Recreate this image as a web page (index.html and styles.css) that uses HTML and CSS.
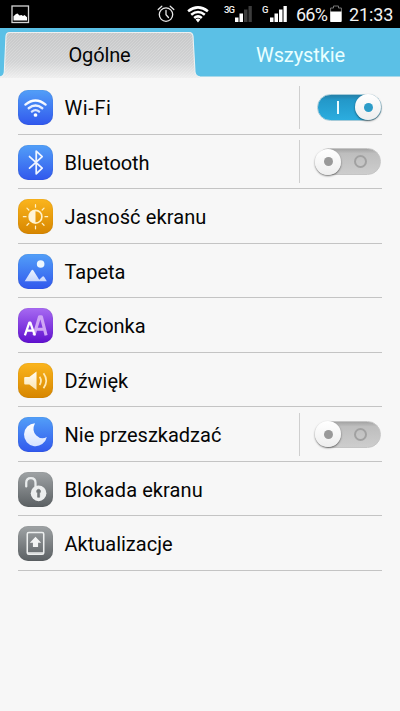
FILE: index.html
```html
<!DOCTYPE html>
<html lang="pl">
<head>
<meta charset="utf-8">
<title>Ustawienia</title>
<link rel="stylesheet" href="styles.css">
</head>
<body>
<svg class="defs" width="0" height="0" aria-hidden="true">
  <defs>
    <linearGradient id="white" x1="0" y1="0" x2="0" y2="1"><stop offset="0" stop-color="#fff"/><stop offset="1" stop-color="#d5e2ff"/></linearGradient>
    <linearGradient id="cream" x1="0" y1="0" x2="0" y2="1"><stop offset="0" stop-color="#fffdf5"/><stop offset="1" stop-color="#fbe4b0"/></linearGradient>
  </defs>
</svg>
<header class="status">
  <svg class="st-picture" width="19" height="19" viewBox="0 0 19 19"><rect x="1" y="1" width="16.500" height="16.500" fill="none" stroke="#d4d4d4" stroke-width="1.300"/><path d="M2.500 15.500V11.200L5 9L6.500 8.500L8.500 10.500L10.500 10L12 11L13.500 10L16 12.200V15.500Z" fill="#fff"/></svg>
  <svg class="st-alarm" width="18" height="18" viewBox="0 0 18 18" fill="none" stroke="#e8e8e8" stroke-width="1.300" stroke-linecap="round"><circle cx="9" cy="9.600" r="6.700"/><path d="M9 5.500V9.700L11.500 12.500M1.200 4.500L4.800 1.300M16.800 4.500L13.200 1.300"/></svg>
  <svg class="st-wifi" width="22" height="18" viewBox="0 0 22 18" fill="none" stroke="#fff" stroke-width="2.600"><path d="M1.100 6.200Q11-1.500 20.900 6.200M4.200 9.700Q11 4.300 17.800 9.700M7.200 13Q11 9.700 14.800 13"/><path d="M8.600 14.500Q11 12.600 13.400 14.500L11 17.500Z" fill="#fff" stroke="none"/></svg>
  <span class="net net-3g">3G</span>
  <svg class="bars bars-a" width="17" height="18" viewBox="0 0 17 18" fill="#fff"><rect y="12.500" width="3.500" height="4.500"/><rect x="4.500" y="8.500" width="3.500" height="8.500"/><rect x="9" y="4.500" width="3.500" height="12.500" fill="#3d3d3d"/><rect x="13.500" y="1" width="3.300" height="16" fill="#3d3d3d"/></svg>
  <span class="net net-g">G</span>
  <svg class="bars bars-b" width="17" height="18" viewBox="0 0 17 18" fill="#fff"><rect y="12.500" width="3.500" height="4.500"/><rect x="4.500" y="8.500" width="3.500" height="8.500"/><rect x="9" y="4.500" width="3.500" height="12.500"/><rect x="13.500" y="1" width="3.300" height="16"/></svg>
  <span class="percent">66%</span>
  <svg class="battery" width="12" height="18" viewBox="0 0 12 18"><path d="M.6 16V3H3.500V1H8.500V3H11.400V16" fill="none" stroke="#777"/><rect x=".3" y="6.500" width="11.200" height="10.500" fill="#fff"/></svg>
  <span class="clock">21:33</span>
</header>
<nav class="tabs">
  <div class="tab active">
    <svg class="tab-shape" width="200" height="50" viewBox="0 0 200 50">
      <defs>
        <linearGradient id="tabfill" x1="0" y1="0" x2="0" y2="1"><stop offset="0" stop-color="#c6c7c8"/><stop offset=".65" stop-color="#d2d3d4"/><stop offset="1" stop-color="#efefef"/></linearGradient>
        <pattern id="hatch" width="3" height="3" patternUnits="userSpaceOnUse"><path d="M0 3L3 0" stroke="#fff" stroke-opacity=".3" stroke-width=".6"/></pattern>
      </defs>
      <path d="M0 49Q4 48 4.300 44L6 8Q6.300 4 10 4H189Q192.500 4 193 8L195 44Q195.500 48 200 49V50H0Z" fill="url(#tabfill)"/>
      <path d="M0 49Q4 48 4.300 44L6 8Q6.300 4 10 4H189Q192.500 4 193 8L195 44Q195.500 48 200 49V50H0Z" fill="url(#hatch)"/>
      <path d="M0 49Q4 48 4.300 44L6 8Q6.300 4.500 10 4.500H189Q192.500 4.500 193 8L195 44Q195.500 48 200 49" fill="none" stroke="#eef1f2" stroke-width="1.100"/>
    </svg>
    <span class="tab-name">Ogólne</span>
  </div>
  <div class="tab"><span class="tab-name other">Wszystkie</span></div>
</nav>
<main class="list">
  <div class="row">
    <svg class="icon blue" viewBox="0 0 34 34" fill="none" stroke="url(#white)" stroke-width="2.300" stroke-linecap="round"><path d="M7.200 14.200Q17 6.200 26.800 14.200M10.400 17.700Q17 12.300 23.600 17.700M13.500 21Q17 18.100 20.500 21"/><circle cx="17" cy="24.300" r="1.800" fill="#fff" stroke="none"/></svg>
    <span class="label l-wifi">Wi-Fi</span>
    <div class="control"><div class="switch on"><i class="mark"></i><i class="knob"></i></div></div>
  </div>
  <div class="row">
    <svg class="icon blue" viewBox="0 0 34 34" fill="none" stroke="#f0f6ff" stroke-width="1.700" stroke-linejoin="round" stroke-linecap="round"><path d="M11.200 11.200L23.500 22.500L17.700 28V6L23.500 11.200L11.200 22.500"/></svg>
    <span class="label l-bt">Bluetooth</span>
    <div class="control"><div class="switch off"><i class="mark"></i><i class="knob"></i></div></div>
  </div>
  <div class="row">
    <svg class="icon orange" viewBox="0 0 34 34" fill="none" stroke="#fff1c8" stroke-width="1.200" stroke-linecap="round"><circle cx="17" cy="17.200" r="6.200" stroke-width="1.600"/><path d="M17 11A6.200 6.200 0 0 0 17 23.400Z" fill="#fff4d8" stroke="none"/><path d="M17 5.500V8M17 26.400V29M5.200 17.200H7.800M26.200 17.200H28.800M8.700 8.900L10.500 10.700M23.500 23.700L25.300 25.500M25.300 8.900L23.500 10.700M10.500 23.700L8.700 25.500"/></svg>
    <span class="label l-bright">Jasność ekranu</span>
  </div>
  <div class="row">
    <svg class="icon blue" viewBox="0 0 34 34"><circle cx="22" cy="9.700" r="3.700" fill="#edf7ff"/><path d="M6.500 26.500L13 16Q14 14.600 15 16L20.600 25L23.600 22Q24.600 21.200 25.500 22.300L28 26.500Z" fill="url(#white)" opacity=".9"/></svg>
    <span class="label l-wall">Tapeta</span>
  </div>
  <div class="row">
    <svg class="icon purple" viewBox="0 0 34 34" fill="none" stroke-linejoin="round"><path d="M15.500 26.500L20.900 8.500H22.700L27.300 26.500M17.500 20.700H25.600" stroke="#cfa6f5" stroke-width="3"/><path d="M6.700 26.500L11 14.300H12L16.300 26.500M8.400 22H14.500" stroke="#fff" stroke-width="2.200"/></svg>
    <span class="label l-font">Czcionka</span>
  </div>
  <div class="row">
    <svg class="icon orange" viewBox="0 0 34 34"><path d="M6 14.300Q6 13.500 7 13.500H11L18 8.200V26.200L11 21H7Q6 21 6 20Z" fill="url(#cream)"/><path d="M21 13.300Q23.600 17.200 21 21.300M24.800 10Q30 17.200 24.800 24.500" fill="none" stroke="#ffe9b4" stroke-width="1.700"/></svg>
    <span class="label l-sound">Dźwięk</span>
  </div>
  <div class="row">
    <svg class="icon blue" viewBox="0 0 34 34"><path d="M16.500 6A11.200 11.200 0 1 0 28 19.500Q22.500 22.500 17.800 18Q13 13 16.500 6Z" fill="url(#white)"/></svg>
    <span class="label l-dnd">Nie przeszkadzać</span>
    <div class="control"><div class="switch off"><i class="mark"></i><i class="knob"></i></div></div>
  </div>
  <div class="row">
    <svg class="icon gray" viewBox="0 0 34 34"><path d="M8 14V10.500Q8 6 12.500 6Q17 6 17 10.500V15" fill="none" stroke="#e9eced" stroke-width="2.200" stroke-linecap="round"/><circle cx="20" cy="20.700" r="7.600" fill="#eceeee"/><path d="M20 16.800A2 2 0 0 1 21 20.500V24.500H19V20.500A2 2 0 0 1 20 16.800Z" fill="#73787a" stroke="#73787a" stroke-width=".6"/></svg>
    <span class="label l-lock">Blokada ekranu</span>
  </div>
  <div class="row">
    <svg class="icon gray" viewBox="0 0 34 34"><path d="M10.500 6.300H23.500Q25 6.300 25 7.800V26Q25 27.500 23.500 27.500H10.500Q9 27.500 9 26V7.800Q9 6.300 10.500 6.300Z" fill="none" stroke="#eceeee" stroke-width="1.500"/><path d="M9 26.300H25" stroke="#eceeee" stroke-width="1.500"/><path d="M17 10.500L22.500 16.200H19.500V20.500H14.500V16.200H11.500Z" fill="#f3f4f4"/></svg>
    <span class="label l-update">Aktualizacje</span>
  </div>
</main>
</body>
</html>
```

FILE: styles.css
```css
* { box-sizing: border-box; }
body { margin: 0; width: 400px; height: 711px; overflow: hidden; background: #f7f7f7; font-family: Roboto, sans-serif; color: #050505; }
.defs { display: block; }
.status { display: flex; height: 28px; background: #000; color: #f2f2f2; white-space: nowrap; }
.status svg, .status span { flex: none; }
.st-picture { margin: 5px 0 0 11px; }
.st-alarm { margin: 5px 0 0 127px; }
.st-wifi { margin: 5px 0 0 12px; }
.net { font-size: 9.5px; line-height: 11px; margin-top: 4px; font-weight: 500; }
.net-3g { margin-left: 15px; width: 11px; letter-spacing: -.9px; }
.bars { margin-top: 5px; }
.net-g { margin-left: 10px; width: 8px; }
.percent { margin-left: 9px; width: 34px; font-size: 18px; line-height: 29px; letter-spacing: -.8px; }
.battery { margin-top: 5px; }
.clock { margin-left: 7px; font-size: 18px; line-height: 29px; letter-spacing: -.1px; }
.tabs { display: grid; grid-template-columns: 199px 201px; height: 49px; background: #5bc0e6; border-bottom: 1px solid #a9d9ea; }
.tab { position: relative; display: flex; justify-content: center; align-items: center; padding-top: 6px; }
.tab-shape { position: absolute; left: 0; top: 0; }
.tab-name { position: relative; font-size: 20px; line-height: 24px; letter-spacing: -.15px; }
.tab-name.other { color: #e9ffff; letter-spacing: -.1px; left: 1px; }
.list { margin: 3px 18px 0; }
.row { display: flex; align-items: center; height: 54.5px; border-bottom: 1px solid #c4c4c4; }
.icon { width: 35px; height: 35px; margin-top: 1.5px; border-radius: 10px; flex: none; box-shadow: inset 0 0 1px rgba(0,0,0,.25); }
.blue { background: linear-gradient(#529ff8, #3158ed); }
.orange { background: linear-gradient(#fbb51d, #d78600); }
.purple { background: linear-gradient(#a76af2, #6010cf); }
.gray { background: linear-gradient(#9fa3a5, #5b6063); }
.label { margin: 3px 0 0 11.5px; font-size: 20px; line-height: 26px; white-space: nowrap; letter-spacing: 0; }
.l-wifi { letter-spacing: .6px; }
.l-bt, .l-font { letter-spacing: -.08px; }
.l-bright, .l-lock { letter-spacing: .1px; }
.control { margin-left: auto; width: 83px; height: 43px; border-left: 1px solid #cfcfcf; display: flex; align-items: center; padding-left: 15px; margin-top: 1px; }
.switch { display: flex; align-items: center; width: 65px; height: 27px; border-radius: 14px; flex: none; }
.switch.on { margin-left: 2px; width: 65px; background: linear-gradient(#2580a8, #2398c9 20%, #2caddf); border: 1px solid #a5cad8; }
.switch.off { margin-left: 1px; background: linear-gradient(#a4a4a4, #bebebe 18%, #cdcdcd); border: 1px solid #c5c5c5; }
.knob { display: grid; place-items: center; flex: none; width: 26px; height: 26px; border-radius: 50%; background: linear-gradient(#fff, #eee); box-shadow: 0 1px 2px rgba(0,0,0,.55); }
.knob::after { content: ""; width: 9px; height: 9px; border-radius: 50%; background: #2d9cc8; }
.on .mark { width: 3px; height: 13px; margin: 0 16px 0 19px; background: #eafaff; }
.off .knob { order: -1; margin-left: -2px; }
.off .knob::after { background: #999; }
.off .mark { width: 13px; height: 13px; border: 2px solid #a1a1a1; border-radius: 50%; margin-left: 13px; }
```
